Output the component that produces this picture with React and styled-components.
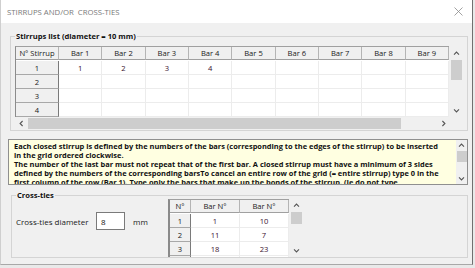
import React from "react";
import styled, { createGlobalStyle } from "styled-components";

const GlobalStyle = createGlobalStyle`
  html, body { margin: 0; padding: 0; }
  body {
    background: #e9e9e9;
    font-family: "Open Sans", "Noto Sans", sans-serif;
    color: #1e1e1e;
  }
`;

const Window = styled.div`
  width: 473px;
  height: 265px;
  box-sizing: border-box;
  background: #f0f0f0;
  border-left: 1px solid #cfcfcf;
  border-right: 1px solid #707070;
  border-bottom: 1px solid #a8a8a8;
  display: flex;
  flex-direction: column;
  overflow: hidden;
`;

const TitleBar = styled.div`
  height: 23px;
  flex: none;
  background: #fff;
  display: flex;
  align-items: center;
  justify-content: space-between;
  padding: 0 9px 0 6px;
  font-size: 7.75px;
  color: #7b7b7b;
  white-space: pre;
`;

const Body = styled.div`
  flex: 1;
  display: flex;
  flex-direction: column;
  padding: 8px 4px 0 9px;
`;

const Group = styled.fieldset`
  margin: ${(p) => p.$mt}px 0 0 ${(p) => p.$ml}px;
  padding: ${(p) => p.$pad};
  height: ${(p) => p.$h}px;
  box-sizing: border-box;
  border: 1px solid #d4d4d4;
  min-width: 0;
`;

const Legend = styled.legend`
  padding: 0 1px;
  font-size: 7.6px;
  font-weight: 700;
  line-height: 10px;
  color: #111;
`;

// ---- grid parts
const Frame = styled.div`
  display: flex;
  flex-direction: column;
`;

const Row = styled.div`
  display: flex;
`;

const Viewport = styled.div`
  width: ${(p) => p.$w}px;
  height: ${(p) => p.$h}px;
  box-sizing: border-box;
  overflow: hidden;
  background: #fff;
  border-top: 1px solid #a0a0a0;
  border-left: ${(p) => p.$left || "1px solid #8c8c8c"};
  margin-top: ${(p) => p.$mt || 0}px;
`;

const Cells = styled.div`
  display: grid;
  grid-template-columns: ${(p) => p.$cols};
  grid-auto-rows: 14px;
`;

const Cell = styled.div`
  display: flex;
  align-items: center;
  justify-content: center;
  box-sizing: border-box;
  font-size: 7.6px;
  white-space: nowrap;
  height: ${(p) => (p.$head ? 13 : 14)}px;
  background: ${(p) => (p.$head || p.$side ? "#f0f0f0" : "#fff")};
  color: ${(p) => (p.$head || p.$side ? "#1a1a1a" : "#3a1230")};
  border-right: 1px solid
    ${(p) => (p.$side ? "#7a7a7a" : p.$head ? "#b4b4b4" : "#ececec")};
  border-bottom: 1px solid
    ${(p) => (p.$head ? "#a0a0a0" : p.$side ? "#a8a8a8" : "#ececec")};
`;

const VScroll = styled.div`
  width: ${(p) => p.$w}px;
  height: ${(p) => p.$h}px;
  flex: none;
  background: #f0f0f0;
  display: flex;
  flex-direction: column;
  align-items: center;
  margin-top: ${(p) => p.$mt || 0}px;
`;

const HScroll = styled.div`
  width: ${(p) => p.$w}px;
  height: 13px;
  background: #f0f0f0;
  display: flex;
  align-items: center;
`;

const Arrow = styled.div`
  flex: none;
  width: ${(p) => p.$w || 13}px;
  height: ${(p) => p.$h || 13}px;
  display: flex;
  align-items: center;
  justify-content: center;
`;

const Thumb = styled.div`
  flex: none;
  background: #cdcdcd;
  width: ${(p) => p.$w}px;
  height: ${(p) => p.$h}px;
`;

const Fill = styled.div`
  flex: 1;
`;

const Corner = styled.div`
  width: 14px;
  height: 13px;
  background: #f0f0f0;
`;

// ---- note
const Note = styled.div`
  margin: 8px 0 0 -2px;
  height: 46px;
  box-sizing: border-box;
  border: 1px solid #8f8f8f;
  background: #ffffe1;
  display: flex;
`;

const NoteText = styled.div`
  flex: 1;
  padding: 2px 0 0 5px;
  font-size: 7.45px;
  font-weight: 700;
  line-height: 9px;
  white-space: nowrap;
  overflow: hidden;
  color: #111;
`;

// ---- cross-ties
const Content = styled.div`
  display: flex;
  align-items: flex-start;
`;

const LeftPane = styled.div`
  width: 152px;
  padding-top: 12px;
  display: flex;
  align-items: center;
  font-size: 8px;
  color: #1a1a1a;
`;

const Label = styled.span`
  width: 80px;
`;

const Input = styled.input`
  width: 29px;
  height: 18px;
  box-sizing: border-box;
  border: 1px solid #7a7a7a;
  padding: 0 0 0 4px;
  font-family: inherit;
  font-size: 8px;
  color: #111;
  background: #fff;
  outline: none;
  margin-right: 8px;
`;

const Chevron = ({ dir }) => {
  const pts = {
    up: "1,4.6 3.5,2.1 6,4.6",
    down: "1,2.4 3.5,4.9 6,2.4",
    left: "4.6,1 2.1,3.5 4.6,6",
    right: "2.4,1 4.9,3.5 2.4,6",
  }[dir];
  return (
    <svg width="7" height="7" viewBox="0 0 7 7">
      <polyline points={pts} fill="none" stroke="#555" strokeWidth="1.1" />
    </svg>
  );
};

const CloseIcon = () => (
  <svg width="9" height="9" viewBox="0 0 9 9">
    <path d="M0.5 0.5 L8.5 8.5 M8.5 0.5 L0.5 8.5" stroke="#8a8a8a" strokeWidth="0.8" />
  </svg>
);

const stirrups = [
  ["1", "1", "2", "3", "4"],
  ["2"],
  ["3"],
  ["4"],
  [""],
];

const ties = [
  ["1", "1", "10"],
  ["2", "11", "7"],
  ["3", "18", "23"],
  ["", "", ""],
];

const StirrupGrid = () => (
  <Frame>
    <Row>
      <Viewport $w={434} $h={71}>
        <Cells $cols="43px repeat(9, 1fr)">
          <Cell $head>N° Stirrup</Cell>
          {Array.from({ length: 9 }, (_, i) => (
            <Cell $head key={i}>Bar {i + 1}</Cell>
          ))}
          {stirrups.map((r, ri) =>
            Array.from({ length: 10 }, (_, c) => (
              <Cell key={ri + "-" + c} $side={c === 0}>
                {r[c] || ""}
              </Cell>
            ))
          )}
        </Cells>
      </Viewport>
      <VScroll $w={14} $h={71}>
        <Arrow $h={14}>
          <Chevron dir="up" />
        </Arrow>
        <Thumb $w={11} $h={20} />
        <Fill />
        <Arrow $h={14}>
          <Chevron dir="down" />
        </Arrow>
      </VScroll>
    </Row>
    <Row>
      <HScroll $w={434}>
        <Arrow>
          <Chevron dir="left" />
        </Arrow>
        <Thumb $w={373} $h={11} />
        <Fill />
        <Arrow $w={12}>
          <Chevron dir="right" />
        </Arrow>
      </HScroll>
      <Corner />
    </Row>
  </Frame>
);

const TiesTable = () => (
  <Row>
    <Viewport $w={121} $h={58} $mt={-1} $left="2px solid #8a8a8a">
      <Cells $cols="21px 49px 49px">
        <Cell $head>N°</Cell>
        <Cell $head>Bar N°</Cell>
        <Cell $head>Bar N°</Cell>
        {ties.map((r, ri) =>
          r.map((v, c) => (
            <Cell key={ri + "-" + c} $side={c === 0}>
              {v}
            </Cell>
          ))
        )}
      </Cells>
    </Viewport>
    <VScroll $w={14} $h={58} $mt={-1}>
      <Arrow $h={13}>
        <Chevron dir="up" />
      </Arrow>
      <Thumb $w={11} $h={12} />
      <Fill />
      <Arrow $h={14}>
        <Chevron dir="down" />
      </Arrow>
    </VScroll>
  </Row>
);

export default function App() {
  return (
    <>
      <GlobalStyle />
      <Window>
        <TitleBar>
          <span>STIRRUPS AND/OR  CROSS-TIES</span>
          <CloseIcon />
        </TitleBar>
        <Body>
          <Group $mt={0} $ml={0} $h={100} $pad="5px 4px 0 4px">
            <Legend>Stirrups list (diameter = 10 mm)</Legend>
            <StirrupGrid />
          </Group>

          <Note>
            <NoteText>
              Each closed stirrup is defined by the numbers of the bars (corresponding to the edges of the stirrup) to be inserted
              <br />
              in the grid ordered clockwise.
              <br />
              The number of the last bar must not repeat that of the first bar. A closed stirrup must have a minimum of 3 sides
              <br />
              defined by the numbers of the corresponding barsTo cancel an entire row of the grid (= entire stirrup) type 0 in the
              <br />
              first column of the row (Bar 1). Type only the bars that make up the bonds of the stirrup. (Ie do not type
            </NoteText>
            <VScroll $w={11} $h={44}>
              <Arrow $w={11} $h={11}>
                <Chevron dir="up" />
              </Arrow>
              <Thumb $w={10} $h={11} />
              <Fill />
              <Arrow $w={11} $h={11}>
                <Chevron dir="down" />
              </Arrow>
            </VScroll>
          </Note>

          <Group $mt={5} $ml={1} $h={68} $pad="0 4px 0 4px">
            <Legend>Cross-ties</Legend>
            <Content>
              <LeftPane>
                <Label>Cross-ties diameter</Label>
                <Input defaultValue="8" readOnly />
                <span>mm</span>
              </LeftPane>
              <TiesTable />
            </Content>
          </Group>
        </Body>
      </Window>
    </>
  );
}
